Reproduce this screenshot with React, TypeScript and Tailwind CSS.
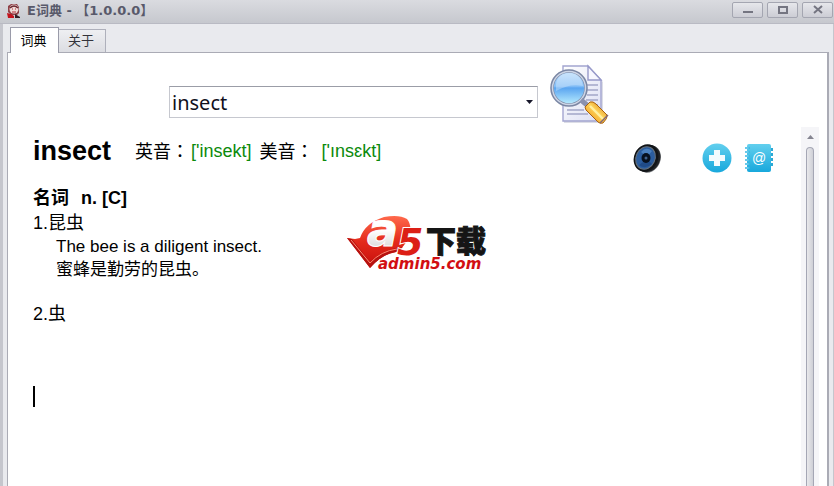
import { useState } from 'react'

const cjk = "font-['Liberation_Sans','Noto_Sans_CJK_SC',sans-serif]"

function AppIcon() {
  return (
    <svg width="14" height="16" viewBox="0 0 14 16" aria-hidden="true">
      <path d="M1 3L4 1H10L12 4V10L10 12H4L1 9Z" fill="#8f4148" />
      <circle cx="7" cy="6" r="4.5" fill="#eedbd8" />
      <path d="M3 5Q7 1 11 5" fill="none" stroke="#6c2830" strokeWidth="1.5" />
      <path d="M5 6h1M8 6h1M5 9h4" stroke="#b62d35" strokeWidth="1.2" />
      <path d="M0 10L4 11L7 13V15H1Z" fill="#c3131d" />
      <path d="M8 11L13 14V15H8Z" fill="#322026" />
    </svg>
  )
}

function SearchIcon() {
  return (
    <svg width="60" height="64" viewBox="0 0 60 64" aria-hidden="true">
      <defs>
        <linearGradient id="paper" x1="0" y1="0" x2="1" y2="1">
          <stop offset="0" stopColor="#ffffff" />
          <stop offset="1" stopColor="#dcdff3" />
        </linearGradient>
        <linearGradient id="lens" x1="0" y1="0" x2="0" y2="1">
          <stop offset="0" stopColor="#b9dcfb" />
          <stop offset="0.45" stopColor="#83bdf6" />
          <stop offset="0.5" stopColor="#5ba5f0" />
          <stop offset="1" stopColor="#bdf0ff" />
        </linearGradient>
        <linearGradient id="handle" x1="0" y1="1" x2="1" y2="0">
          <stop offset="0" stopColor="#e88408" />
          <stop offset="0.55" stopColor="#ffd45a" />
          <stop offset="1" stopColor="#c96c08" />
        </linearGradient>
      </defs>
      <path d="M14 4H40L53 18V59H14Z" fill="#dcdde6" />
      <path d="M13 2H38L51 16V57H13Z" fill="url(#paper)" stroke="#a3a5d0" strokeWidth="1.4" />
      <path d="M38 2V16H51Z" fill="#f7f7ff" stroke="#9799c9" strokeWidth="1.4" />
      <path d="M34 21H48M36 26H48M37 31H48M36 36H48M34 41H48M17 46H34M17 50H38" stroke="#a3a7c8" strokeWidth="1.6" />
      <circle cx="19" cy="24" r="17" fill="url(#lens)" stroke="#7b87a4" strokeWidth="3.6" />
      <circle cx="19" cy="24" r="16.5" fill="none" stroke="#ccd5e6" strokeWidth="1.5" />
      <path d="M6 24Q5 10 19 9Q31 9 33 22Q20 19 6 27Z" fill="#ffffff" opacity="0.3" />
      <path d="M31 36L37 41" stroke="#8a91ae" strokeWidth="5" />
      <path d="M35 43L40 38Q43 37 46 40L57 51Q58 54 53 59Q50 60 48 58L36 46Z" fill="url(#handle)" stroke="#aa620f" />
      <path d="M40 42L53 55" stroke="#fff0a2" strokeWidth="2.4" />
      <path d="M50 59L58 51" stroke="#806778" strokeWidth="1.4" />
    </svg>
  )
}

function SpeakerIcon() {
  return (
    <svg width="30" height="30" viewBox="0 0 30 30" aria-hidden="true">
      <ellipse cx="17" cy="16" rx="11.5" ry="14" fill="#777a7d" transform="rotate(25 17 16)" />
      <ellipse cx="16" cy="15.5" rx="12" ry="14" fill="#202326" transform="rotate(25 16 15.5)" />
      <ellipse cx="14" cy="15" rx="12" ry="14" fill="#111417" transform="rotate(25 14 15)" />
      <ellipse cx="13.5" cy="15" rx="9.5" ry="11.5" fill="#2b5d9e" stroke="#66717c" transform="rotate(25 13.5 15)" />
      <path d="M9 9Q14 3 20 8L15 14Z" fill="#4a80be" />
      <path d="M7 22Q13 27 20 21L15 16Z" fill="#1f4b88" />
      <ellipse cx="14" cy="15" rx="4.5" ry="5" fill="#07101e" />
      <circle cx="14" cy="15" r="1.5" fill="#41618a" />
    </svg>
  )
}

function AddIcon() {
  return (
    <svg width="30" height="30" viewBox="0 0 30 30" aria-hidden="true">
      <defs>
        <linearGradient id="sky" x1="0" y1="0" x2="0" y2="1">
          <stop offset="0" stopColor="#62cfee" />
          <stop offset="1" stopColor="#18a8dc" />
        </linearGradient>
      </defs>
      <circle cx="15" cy="15" r="14.5" fill="url(#sky)" />
      <path d="M12 7H18V12H23V18H18V23H12V18H7V12H12Z" fill="#f4fbfe" />
    </svg>
  )
}

function BookIcon() {
  return (
    <svg width="30" height="30" viewBox="0 0 30 30" aria-hidden="true">
      <rect x="3" y="1" width="24" height="28" rx="2" fill="url(#sky)" />
      <path d="M3 4V27" stroke="#ffffff" strokeWidth="3" strokeDasharray="2 2" />
      <path d="M1 5H6M1 9H6M1 13H6M1 17H6M1 21H6M1 25H6" stroke="#37b8e3" strokeWidth="1.5" />
      <path d="M27 5H29V8H27M27 10H29V13H27M27 15H29V18H27M27 20H29V23H27" fill="#2ba9d4" />
      <text x="15" y="20" textAnchor="middle" fontSize="14" fill="#ffffff" fontFamily="Liberation Sans, sans-serif">@</text>
    </svg>
  )
}

function Logo() {
  return (
    <svg width="144" height="80" viewBox="0 -20 144 80" role="img" aria-label="a5下载 admin5.com">
      <defs>
        <linearGradient id="red" x1="0" y1="0" x2="0" y2="1">
          <stop offset="0" stopColor="#ff6a4c" />
          <stop offset="0.5" stopColor="#e3291b" />
          <stop offset="1" stopColor="#c60d0b" />
        </linearGradient>
        <linearGradient id="silver" x1="0" y1="0" x2="0" y2="1">
          <stop offset="0.5" stopColor="#ffffff" />
          <stop offset="1" stopColor="#c9c9c9" />
        </linearGradient>
      </defs>
      <path d="M0 22L8 23L13 22Q18 7 37 1Q52 -2 60 3Q66 10 61 22Q57 32 49 36Q35 38 23 52Z" fill="url(#red)" />
      <path d="M0 22L23 52Q35 38 49 36L56 31Q36 33 23 46L5 23Z" fill="#b7120f" />
      <path d="M4 24L23 47Q34 35 50 33" fill="none" stroke="#ff8a72" strokeWidth="1" />
      <text x="20" y="30" fontSize="46" fontWeight="700" fontStyle="italic" fill="url(#silver)" stroke="#ffffff" strokeWidth="1" fontFamily="DejaVu Sans, sans-serif">a</text>
      <text x="50" y="39" fontSize="38" fontWeight="700" fontStyle="italic" fill="#dc1f16" stroke="#ffffff" strokeWidth="2" paintOrder="stroke" fontFamily="DejaVu Sans, sans-serif">5</text>
      <text x="79" y="36" fontSize="30" fontWeight="900" fill="#151515" stroke="#151515" fontFamily="Noto Sans CJK SC, sans-serif">下载</text>
      <text x="31" y="53" fontSize="15" fontWeight="700" fontStyle="italic" fill="#d20e12" stroke="#ffffff" strokeWidth="2" paintOrder="stroke" fontFamily="DejaVu Sans, sans-serif">admin5.com</text>
    </svg>
  )
}

const windowButtons = [
  { label: 'Minimize', d: 'M4 9H14' },
  { label: 'Maximize', d: 'M5 4H13V10H5Z' },
  { label: 'Close', d: 'M5 3L13 10M13 3L5 10' },
]

function TitleBar() {
  return (
    <header className="flex h-6 items-start justify-between border-b border-[#b9bac3] bg-linear-to-b from-[#dadbe0] to-[#c6c8ce] pl-[7px] pr-px">
      <div className="flex h-[22px] items-center gap-1.5">
        <AppIcon />
        <h1 className="whitespace-pre font-['DejaVu_Sans','Noto_Sans_CJK_SC',sans-serif] text-[13px] leading-4 font-bold text-[#58596a]">E词典 - 【1.0.0.0】</h1>
      </div>
      <div className="flex gap-1 pt-0.5">
        {windowButtons.map(b => (
          <button key={b.label} aria-label={b.label} className="flex h-4 w-[31px] items-center justify-center rounded-xs border border-[#a4a6b1] bg-linear-to-b from-[#e6e7eb] to-[#cccdd5]">
            <svg width="18" height="14" viewBox="0 0 18 14" aria-hidden="true">
              <path d={b.d} fill="none" stroke="#747581" strokeWidth="2" />
            </svg>
          </button>
        ))}
      </div>
    </header>
  )
}

const tabs = ['词典', '关于']

function Colon() {
  return <span className="font-['Noto_Sans_CJK_TC',sans-serif]">：</span>
}

export default function App() {
  const [tab, setTab] = useState('词典')
  const [word, setWord] = useState('insect')

  return (
    <div className={`flex min-h-screen flex-col bg-[#e9eaee] text-black ${cjk}`}>
      <TitleBar />
      <div className="flex flex-1 flex-col border-l-3 border-r border-[#c5c6cd] pl-1 pr-1">
        <nav role="tablist" className="flex h-7 items-end px-[3px] text-[13px] leading-4">
          {tabs.map(t => (
            <button
              key={t}
              role="tab"
              aria-selected={tab === t}
              onClick={() => setTab(t)}
              className={
                tab === t
                  ? 'relative z-10 -mb-px h-[26px] w-[49px] border border-b-0 border-[#9a9ba9] bg-white pr-0.5'
                  : 'h-[23px] w-[47px] border border-b-0 border-l-0 border-[#aeb0bb] bg-linear-to-b from-[#eeeff2] to-[#dcdde2] pr-0.5 text-[#33333b]'
              }
            >
              {t}
            </button>
          ))}
        </nav>

        <main className="relative flex flex-1 flex-col border border-b-0 border-r-2 border-[#aaabb5] bg-white">
          <form className="flex h-[74px] items-center pt-3 pl-[161px]" onSubmit={e => e.preventDefault()}>
            <div className="mt-3 flex h-8 w-[369px] items-center border border-[#c6c8cf] border-t-[#9b9da7]">
              <input
                aria-label="Word"
                value={word}
                onChange={e => setWord(e.target.value)}
                className="h-full min-w-0 flex-1 px-0.5 font-['Noto_Sans',sans-serif] text-[20px] text-[#10101c] outline-none"
              />
              <button type="button" aria-label="History" className="flex h-full w-4 items-center justify-center">
                <svg width="7" height="4" viewBox="0 0 7 4" aria-hidden="true"><path d="M0 0H7L3.5 4Z" fill="#17172a" /></svg>
              </button>
            </div>
            <button aria-label="Search" className="ml-3">
              <SearchIcon />
            </button>
          </form>

          <div className="flex flex-1 pr-2">
            <article className="min-w-0 flex-1 pl-[25px] text-[18px]">
              <div className="flex h-[58px] items-start justify-between pr-[27px]">
                <div className="flex h-12 items-center">
                  <h2 className="mr-6 text-[27px] leading-8 font-bold">insect</h2>
                  <span>英音<Colon /></span>
                  <span className="mr-2 ml-0.5 text-[#0b8a0b]">['insekt]</span>
                  <span>美音<Colon /></span>
                  <span className="ml-2 text-[#0b8a0b]">['ınsɛkt]</span>
                </div>
                <div className="flex items-center pt-4">
                  <button aria-label="Listen"><SpeakerIcon /></button>
                  <button aria-label="Add word" className="ml-10"><AddIcon /></button>
                  <button aria-label="Word book" className="ml-3"><BookIcon /></button>
                </div>
              </div>

              <h3 className="flex h-[26px] items-center gap-3 font-bold"><span>名词</span><span>n. [C]</span></h3>
              <p className="h-6 leading-6">1.昆虫</p>
              <div className="pl-[23px] text-[17px] leading-[23px]">
                <p>The bee is a diligent insect.</p>
                <p>蜜蜂是勤劳的昆虫。</p>
              </div>
              <p className="mt-[21px] h-6 leading-6">2.虫</p>
              <div className="mt-15 h-[21px] w-0.5 bg-black" />
            </article>

            <div className="flex w-[18px] flex-col items-center bg-[#f5f5f8]">
              <button aria-label="Scroll up" className="flex h-5 w-full items-center justify-center">
                <svg width="7" height="4" viewBox="0 0 7 4" aria-hidden="true"><path d="M0 4H7L3.5 0Z" fill="#858591" /></svg>
              </button>
              <div className="w-2 flex-1 rounded-t-full border border-b-0 border-[#a5a7b5] bg-linear-to-r from-[#e9e9ec] to-[#cfd0d7]" />
            </div>
          </div>

          <div className="pointer-events-none absolute top-[143px] left-[339px]">
            <Logo />
          </div>
        </main>
      </div>
    </div>
  )
}
